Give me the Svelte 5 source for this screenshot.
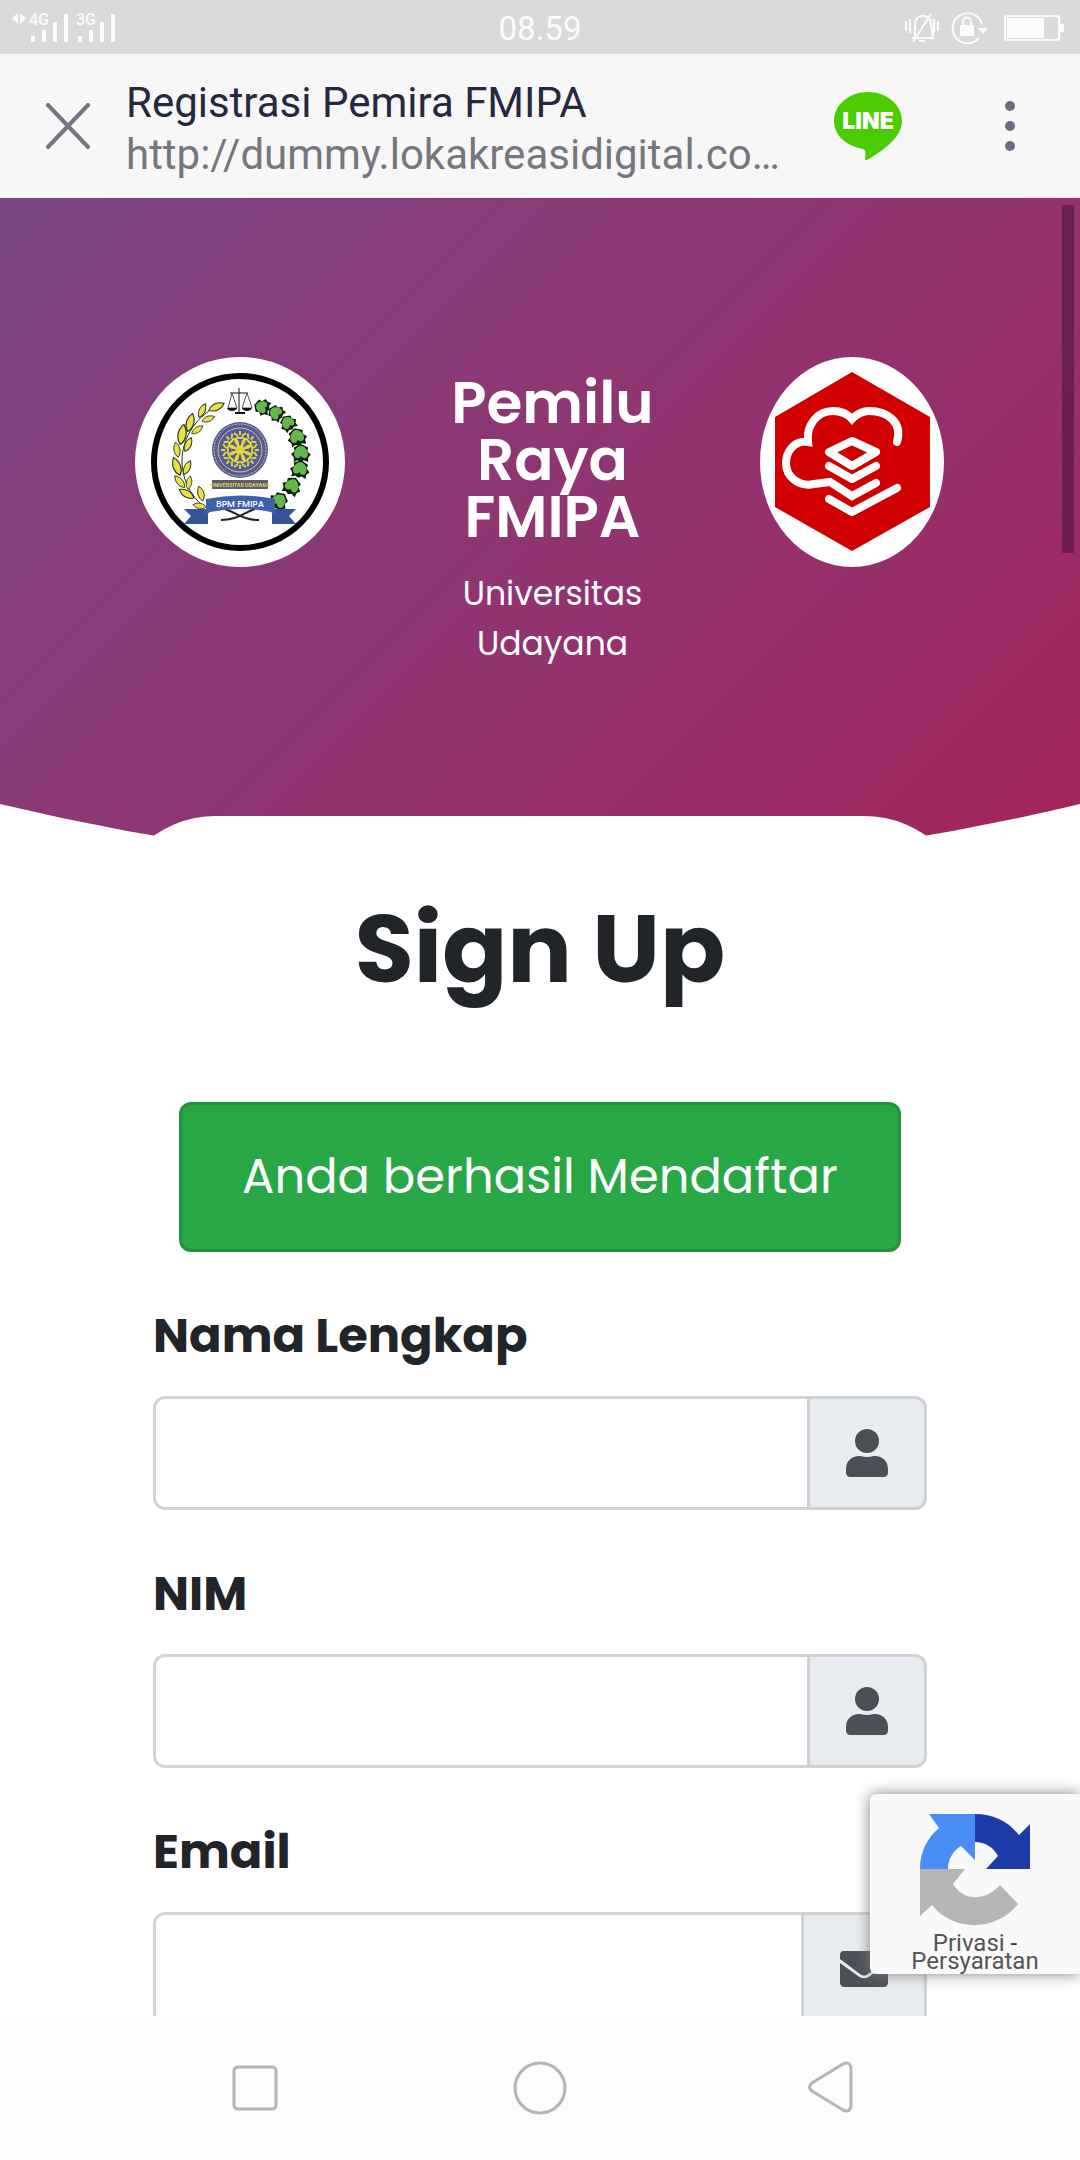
<script>
  const fields = [
    { id: 'nama', label: 'Nama Lengkap', type: 'text', icon: 'user' },
    { id: 'nim', label: 'NIM', type: 'text', icon: 'user' },
    { id: 'email', label: 'Email', type: 'email', icon: 'mail' }
  ];
  const grains = [
    [81, 50, 65, 1], [73, 62, 70, 0.8], [67, 54, 25, 0.9], [55, 66, 15, 1.1],
    [62, 73, 55, 0.8], [47, 78, 10, 1.2], [53, 88, 25, 0.9], [42, 93, -10, 0.9],
    [42, 110, -20, 1.1], [52, 111, 25, 0.9], [45, 125, -40, 0.9], [54, 126, 10, 0.8],
    [52, 137, -60, 1], [66, 137, -15, 0.9], [65, 149, -80, 0.8]
  ];
  const leaves = [
    [127, 50, -75, 0.8], [141, 56, -55, 0.8], [153, 66, -35, 0.8], [162, 80, -15, 0.9],
    [166, 96, 0, 0.9], [165, 112, 10, 0.9], [157, 129, 25, 0.9], [144, 144, 40, 0.9]
  ];
  const petals = [0, 45, 90, 135, 180, 225, 270, 315];
</script>

<div class="screen">
  <header class="status">
    <svg class="signals" viewBox="0 0 120 54" aria-hidden="true">
      <g fill="#fbfbfb">
        <path d="M12 17l6-5v11zM26 17l-6-5v11z" />
        <text x="29" y="24" class="net">4G</text>
        <text x="76" y="24" class="net">3G</text>
        <path d="M31 35h4v6h-4zM42 29h4v12h-4zM53 21h4v20h-4zM64 13h4v28h-4zM78 35h4v6h-4zM89 29h4v12h-4zM100 21h4v20h-4zM111 13h4v28h-4z" />
      </g>
    </svg>
    <time>08.59</time>
    <svg class="indicators" viewBox="0 0 160 54" aria-hidden="true">
      <g fill="none" stroke="#fbfbfb" stroke-width="2">
        <path d="M2 20v10M6 18v14M30 18v14M34 20v10" />
        <path d="M8 37h22M11 36V23c0-11 16-11 16 0l2 13M9 41L27 13M15 40h6" />
        <path d="M78 23a15 15 0 1 0-3 14" />
        <path d="M59 25v-4c0-6 8-6 8 0v4" />
        <rect x="101" y="15" width="54" height="24" rx="2" />
      </g>
      <g fill="#fbfbfb">
        <path d="M56 24h14v11H56zM73 27h11l-5 6zM103 17h37v20h-37zM156 23h4v8h-4z" />
      </g>
    </svg>
  </header>

  <div class="toolbar">
    <button class="tool close" aria-label="Tutup">
      <svg viewBox="0 0 44 46"><path d="M2 2l40 42M42 2L2 44" stroke="#717680" stroke-width="4" stroke-linecap="round" /></svg>
    </button>
    <div class="address">
      <div class="page-title">Registrasi Pemira FMIPA</div>
      <div class="url">http://dummy.lokakreasidigital.co…</div>
    </div>
    <button class="tool line" aria-label="LINE">
      <svg viewBox="0 0 68 68">
        <path d="M34 0C15 0 0 13 0 29c0 15 13 25 29 28 3 1 3 4 2 10 0 1 1 1 2 1C52 57 68 44 68 29 68 13 53 0 34 0z" fill="#4bcc00" />
        <text x="34" y="37" class="line-word">LINE</text>
      </svg>
    </button>
    <button class="tool more" aria-label="Menu">
      <svg viewBox="0 0 10 50" fill="#6d6c80"><circle cx="5" cy="5" r="5" /><circle cx="5" cy="25" r="5" /><circle cx="5" cy="45" r="5" /></svg>
    </button>
  </div>

  <main class="page">
    <section class="hero">
      <div class="brand">
        <svg class="seal" viewBox="0 0 210 210" role="img" aria-label="BPM FMIPA">
          <circle cx="105" cy="105" r="105" fill="#fff" />
          <circle cx="105" cy="105" r="86" fill="none" stroke="#000" stroke-width="6" />
          <path d="M86 47C62 58 47 80 47 104c0 18 8 34 22 46" fill="none" stroke="#26351c" stroke-width="1" />
          {#each grains as [x, y, angle, size]}
            <path d="M0-9C5-3 4 4 0 8C-4 4-5-3 0-9z" transform="translate({x} {y}) rotate({angle}) scale({size})" fill="#e8e046" stroke="#26351c" />
          {/each}
          {#each leaves as [x, y, angle, size]}
            <g transform="translate({x} {y}) rotate({angle}) scale({size})">
              <path d="M0-10L8-6L7-2L11 2L8 5L8 10L3 8L0 10L-4 8L-8 10L-8 5L-11 1L-7-2L-8-6z" fill="#0c1f10" />
              <path d="M0-8C6-7 9 0 7 4C5 7 1 6 0 3C-1 6-5 7-7 4C-9 0-6-7 0-8z" fill="#63b849" />
            </g>
          {/each}
          <path d="M104 31v24M95 36h18" stroke="#111" stroke-width="1" />
          <path d="M100 56h10" stroke="#111" stroke-width="2" />
          <path d="M97 36l-4 15h9zM112 36l-5 15h10z" fill="none" stroke="#555" stroke-width="1" />
          <path d="M92 51h10c-1 4-9 4-10 0zM107 51h10c-1 4-9 4-10 0z" fill="#111" />
          <circle cx="105" cy="93" r="28" fill="#5358a0" />
          <circle cx="105" cy="93" r="26" fill="none" stroke="#d9cf55" stroke-width="1" stroke-dasharray="2 1" />
          <circle cx="105" cy="93" r="22" fill="none" stroke="#d9cf55" stroke-width="1" />
          {#each petals as angle}
            <path d="M0-3C-7-8-5-14 0-12C5-14 7-8 0-3M-2-14l-4-3M2-14l4-3M0-15v-4" transform="translate(105 93) rotate({angle})" fill="none" stroke="#e3d83a" stroke-width="2" />
          {/each}
          <circle cx="105" cy="93" r="4" fill="#e3d83a" />
          <rect x="77" y="123" width="56" height="9" fill="#5c5a76" />
          <text x="105" y="130" class="tiny">UNIVERSITAS UDAYANA</text>
          <path d="M86 163c15 0 20-6 34-11M124 163c-15 0-20-6-34-11" fill="none" stroke="#222" stroke-width="2" />
          <path d="M49 152h24v15H49l7-8zM161 152h-24v15h24l-7-8z" fill="#34549a" />
          <path d="M71 142q34-7 69 0v16l-4-3q-31-6-61 0l-4 3z" fill="#3c62ad" />
          <text x="105" y="150" class="ribbon">BPM FMIPA</text>
        </svg>
        <div class="heading">
          <h1>Pemilu Raya FMIPA</h1>
          <p>Universitas Udayana</p>
        </div>
        <svg class="hex" viewBox="0 0 185 210" role="img" aria-label="Informatika">
          <ellipse cx="92" cy="105" rx="92" ry="105" fill="#fff" />
          <path d="M92 15l78 45v90l-78 44-77-44V60z" fill="#d00000" />
          <g fill="none" stroke="#fff" stroke-width="8" stroke-linecap="round">
            <path d="M137 85c6-20-10-31-28-31-8 0-13 4-17 8-6-7-14-8-19-8-15 0-27 13-25 31-15-2-22 11-22 21 0 15 14 24 28 21l16-2 22 14 24-13" />
            <path d="M69 95l23-11 24 11-24 14zM69 109l23 13 24-13M69 142l23 13 45-24" stroke-linejoin="round" />
          </g>
        </svg>
      </div>
      <svg class="curve" viewBox="0 0 1080 66" preserveAspectRatio="none" aria-hidden="true">
        <path d="M0 0Q540 130 1080 0V66H0z" fill="#fff" />
      </svg>
    </section>

    <form class="card">
      <h2>Sign Up</h2>
      <div class="alert" role="status">Anda berhasil Mendaftar</div>
      {#each fields as field}
        <div class="field">
          <label for={field.id}>{field.label}</label>
          <div class="group">
            <input id={field.id} type={field.type} />
            <span class="addon">
              {#if field.icon === 'user'}
                <svg class="user" viewBox="0 0 42 48" fill="#495057"><circle cx="21" cy="12" r="12" /><path d="M13 27c3 0 4 1 8 1s5-1 8-1c7 0 13 5 13 13v4c0 2-2 4-4 4H4c-2 0-4-2-4-4v-4c0-8 6-13 13-13z" /></svg>
              {:else}
                <svg class="mail" viewBox="0 0 48 36" fill="#495057"><path d="M4 0h40c3 0 4 2 4 4v4L28 23c-3 2-5 2-8 0L0 8V4c0-2 1-4 4-4z" /><path d="M0 12l18 13c4 3 8 3 12 0l18-13v20c0 2-2 4-4 4H4c-2 0-4-2-4-4z" /></svg>
              {/if}
            </span>
          </div>
        </div>
      {/each}
    </form>

    <div class="scrollbar"></div>
    <aside class="captcha">
      <svg viewBox="0 0 110 112" aria-hidden="true">
        <path d="M55 0v46L41 32c-8 5-13 13-13 23H0C0 38 7 24 19 14L9 0z" fill="#4a8df6" />
        <path d="M55 0c18 0 33 7 44 21l11-11v45H66l12-13c-5-9-13-14-23-14z" fill="#1c3aa9" />
        <path d="M0 55h45L33 70c11 18 33 17 47 1l18 19C76 118 33 118 12 91L0 102z" fill="#b5b5b5" />
      </svg>
      <div class="legal"><a href="#privasi">Privasi</a> - <a href="#persyaratan">Persyaratan</a></div>
    </aside>
  </main>

  <nav class="system">
    <button aria-label="Aplikasi terbaru"><svg viewBox="0 0 56 56"><rect x="7" y="7" width="42" height="42" rx="4" /></svg></button>
    <button aria-label="Beranda"><svg viewBox="0 0 56 56"><circle cx="28" cy="28" r="25" /></svg></button>
    <button aria-label="Kembali"><svg viewBox="0 0 56 56"><path d="M46 4L15 23q-5 4 0 8l31 19q7 3 8-4V8q-1-7-8-4z" /></svg></button>
  </nav>
</div>

<style>
  :global(body) { margin: 0; }
  * { box-sizing: border-box; }
  .screen {
    height: 100vh;
    display: flex;
    flex-direction: column;
    font-family: Poppins, Inter, "Liberation Sans", sans-serif;
    color: #212529;
    background: #fff;
  }
  button { border: 0; padding: 0; background: none; }
  svg { display: block; flex: none; }

  .status {
    height: 54px;
    flex: none;
    display: grid;
    grid-template-columns: 1fr auto 1fr;
    align-items: center;
    background: #dadada;
    color: #fbfbfb;
    font-family: Roboto, sans-serif;
  }
  .status time { font-size: 33px; line-height: 54px; padding-top: 2px; }
  .signals { width: 120px; height: 54px; }
  .net { font: 500 16px Roboto, sans-serif; }
  .indicators { width: 160px; height: 54px; justify-self: end; margin-right: 16px; }

  .toolbar {
    height: 144px;
    flex: none;
    display: flex;
    align-items: center;
    padding: 0 65px 0 46px;
    background: #f7f7f7;
    border-bottom: 1px solid #f3e6f1;
    font-family: Roboto, sans-serif;
  }
  .close svg { width: 44px; height: 46px; }
  .address { flex: 1; min-width: 0; margin: 0 50px 0 36px; padding-top: 6px; }
  .page-title, .url {
    font-size: 42px;
    line-height: 52px;
    white-space: nowrap;
    overflow: hidden;
    text-overflow: ellipsis;
  }
  .page-title { color: #24293f; }
  .url { color: #75777d; }
  .line svg { width: 70px; height: 68px; }
  .line-word { font: 900 23px Inter, sans-serif; fill: #fff; text-anchor: middle; }
  .more { margin-left: 102px; }
  .more svg { width: 10px; height: 50px; }

  .page { flex: 1; min-height: 0; position: relative; overflow: hidden; }
  .hero {
    display: flex;
    flex-direction: column;
    background: linear-gradient(135deg, #7b4785 0%, #8c3874 40%, #962f6b 68%, #a4225a 100%);
  }
  .brand {
    display: flex;
    align-items: flex-start;
    min-height: 606px;
    padding: 159px 135px 0;
  }
  .seal { width: 210px; height: 210px; }
  .hex { width: 185px; height: 210px; }
  .heading { flex: 1; padding: 17px 80px 0; text-align: center; color: #fff; }
  h1 { margin: 0 0 24px; font-size: 58px; line-height: 57px; font-weight: 600; }
  p { margin: 0; font-size: 33px; line-height: 50px; }
  .tiny { font: 700 5px Inter, sans-serif; fill: #e3d83a; text-anchor: middle; }
  .ribbon { font: 500 9px Poppins, Inter, sans-serif; fill: #fff; text-anchor: middle; }
  .curve { width: 100%; height: 66px; }

  .card {
    position: relative;
    margin: -54px 10% 0;
    padding: 68px 45px 48px;
    border-radius: 108px;
    background: #fff;
  }
  h2 { margin: 0 0 88px; font-size: 96px; line-height: 130px; font-weight: 700; text-align: center; }
  .alert {
    width: fit-content;
    margin: 0 auto 48px;
    padding: 36px 60px;
    border: 3px solid #24923d;
    border-radius: 12px;
    background: #28a745;
    color: #fff;
    font-size: 48px;
    line-height: 72px;
    white-space: nowrap;
  }
  .field { margin-bottom: 48px; }
  label { display: block; margin-bottom: 24px; font-size: 48px; line-height: 72px; font-weight: 700; }
  .group { display: flex; height: 114px; }
  input {
    flex: 1;
    min-width: 0;
    padding: 18px 36px;
    border: 3px solid #d1d3d6;
    border-right: 0;
    border-radius: 12px 0 0 12px;
    background: #fff;
    font: inherit;
    font-size: 48px;
  }
  .addon {
    display: flex;
    align-items: center;
    padding: 0 36px;
    border: 3px solid #ced2d7;
    border-radius: 0 12px 12px 0;
    background: #e9ecef;
  }
  .user { width: 42px; height: 48px; }
  .mail { width: 48px; height: 36px; }

  .scrollbar {
    position: absolute;
    top: 7px;
    right: 6px;
    width: 12px;
    height: 348px;
    background: rgba(60, 20, 50, 0.5);
  }
  .captcha {
    position: absolute;
    right: 0;
    bottom: 42px;
    width: 210px;
    height: 180px;
    padding-top: 20px;
    border-radius: 6px 0 0 6px;
    background: #f9f9f9;
    box-shadow: 0 0 15px #808080;
  }
  .captcha svg { width: 110px; height: 112px; margin: 0 auto; }
  .legal {
    width: 130px;
    margin: 8px auto 0;
    font-family: Roboto, sans-serif;
    font-size: 24px;
    line-height: 18px;
    text-align: center;
    color: #333;
  }
  .legal a { color: #555; text-decoration: none; }

  .system {
    height: 144px;
    flex: none;
    display: flex;
    justify-content: space-between;
    align-items: center;
    padding: 0 227px;
    background: #fcfcfc;
  }
  .system svg { width: 56px; height: 56px; fill: none; stroke: #b5b5b5; stroke-width: 3; }
</style>
